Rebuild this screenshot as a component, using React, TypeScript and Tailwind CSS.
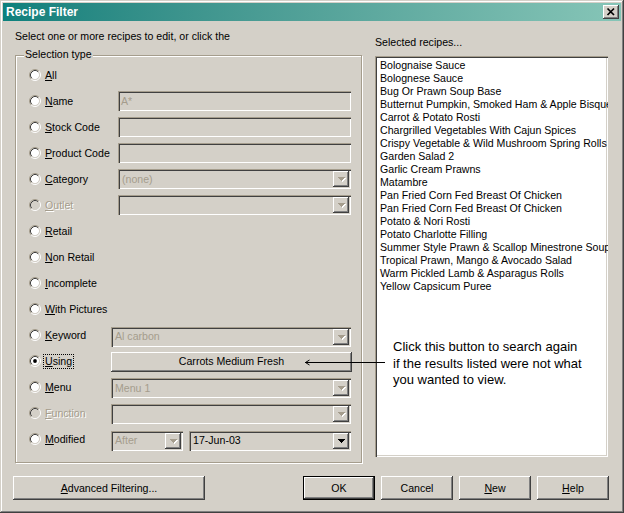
import React from "react";

const sunken =
  "shadow-[inset_1px_1px_0_#a59d8d,inset_2px_2px_0_#404040,inset_-1px_-1px_0_#ffffff,inset_-2px_-2px_0_#d4d0c8]";
const raised =
  "shadow-[inset_-1px_-1px_0_#404040,inset_1px_1px_0_#ffffff,inset_-2px_-2px_0_#808080,inset_2px_2px_0_#d4d0c8]";
const disText = "text-[#a59d8d]";
const disLabel = "text-[#a59d8d] [text-shadow:1px_1px_0_#ffffff]";

function Radio({ checked = false, disabled = false }: { checked?: boolean; disabled?: boolean }) {
  return (
    <svg width="12" height="12" viewBox="0 0 12 12" className="shrink-0">
      <circle cx="6" cy="6" r="4.2" fill={disabled ? "#d4d0c8" : "#ffffff"} />
      <path d="M2.11 9.89A5.5 5.5 0 0 1 9.89 2.11" stroke="#a59d8d" fill="none" />
      <path d="M9.89 2.11A5.5 5.5 0 0 1 2.11 9.89" stroke="#ffffff" fill="none" />
      <path d="M2.82 9.18A4.5 4.5 0 0 1 9.18 2.82" stroke="#404040" fill="none" />
      <path d="M9.18 2.82A4.5 4.5 0 0 1 2.82 9.18" stroke="#d4d0c8" fill="none" />
      {checked && <circle cx="6" cy="6" r="1.9" fill="#000000" />}
    </svg>
  );
}

function Arrow({ disabled = false }: { disabled?: boolean }) {
  const tri = (dx: number, dy: number, fill: string) => (
    <g fill={fill}>
      <rect x={0 + dx} y={0 + dy} width="7" height="1" />
      <rect x={1 + dx} y={1 + dy} width="5" height="1" />
      <rect x={2 + dx} y={2 + dy} width="3" height="1" />
      <rect x={3 + dx} y={3 + dy} width="1" height="1" />
    </g>
  );
  return (
    <svg width="8" height="5" viewBox="0 0 8 5" shapeRendering="crispEdges">
      {disabled ? (
        <>
          {tri(1, 1, "#ffffff")}
          {tri(0, 0, "#a59d8d")}
        </>
      ) : (
        tri(0, 0, "#000000")
      )}
    </svg>
  );
}

function DropBtn({ disabled = false }: { disabled?: boolean }) {
  return (
    <div className={`w-[16px] h-[16px] shrink-0 bg-[#d4d0c8] flex items-center justify-center pl-[1px] pt-[1px] ${raised}`}>
      <Arrow disabled={disabled} />
    </div>
  );
}

function Edit({ value = "", className = "" }: { value?: string; className?: string }) {
  return (
    <div className={`h-[20px] flex items-center pl-[3px] ${sunken} ${className}`}>
      <span className={`leading-[13px] ${disText}`}>{value}</span>
    </div>
  );
}

function Combo({
  value = "",
  disabled = true,
  className = "",
}: {
  value?: string;
  disabled?: boolean;
  className?: string;
}) {
  return (
    <div className={`h-[20px] flex items-center p-[2px] ${sunken} ${className}`}>
      <span className={`flex-1 pl-[2px] leading-[13px] whitespace-nowrap ${disabled ? disText : "text-black"}`}>
        {value}
      </span>
      <DropBtn disabled={disabled} />
    </div>
  );
}

function Label({ text, disabled = false, focus = false }: { text: string; disabled?: boolean; focus?: boolean }) {
  return (
    <span
      className={`leading-[13px] whitespace-nowrap ${disabled ? disLabel : "text-black"} ${
        focus ? "border border-dotted border-black px-[1px] -ml-[2px]" : ""
      }`}
    >
      <span className="underline">{text[0]}</span>
      {text.slice(1)}
    </span>
  );
}

function Row({
  label,
  labelW = 73,
  checked = false,
  disabled = false,
  focus = false,
  children,
}: {
  label: string;
  labelW?: number;
  checked?: boolean;
  disabled?: boolean;
  focus?: boolean;
  children?: React.ReactNode;
}) {
  return (
    <div className="flex items-center h-[26px] pl-[13px] pr-[10px]">
      <Radio checked={checked} disabled={disabled} />
      <div className={`ml-[4px] shrink-0 flex items-center ${labelW === 73 ? "w-[73px]" : "w-[66px]"}`}>
        <Label text={label} disabled={disabled} focus={focus} />
      </div>
      <div className="flex-1 flex items-center min-w-0">{children}</div>
    </div>
  );
}

function Button({
  children,
  className = "",
  isDefault = false,
}: {
  children: React.ReactNode;
  className?: string;
  isDefault?: boolean;
}) {
  if (isDefault) {
    return (
      <div className={`border border-black flex ${className}`}>
        <div className={`flex-1 flex items-center justify-center leading-[13px] ${raised}`}>{children}</div>
      </div>
    );
  }
  return <div className={`flex items-center justify-center leading-[13px] ${raised} ${className}`}>{children}</div>;
}

const recipes = [
  "Bolognaise Sauce",
  "Bolognese Sauce",
  "Bug Or Prawn Soup Base",
  "Butternut Pumpkin, Smoked Ham & Apple Bisque",
  "Carrot & Potato Rosti",
  "Chargrilled Vegetables With Cajun Spices",
  "Crispy Vegetable & Wild Mushroom Spring Rolls",
  "Garden Salad 2",
  "Garlic Cream Prawns",
  "Matambre",
  "Pan Fried Corn Fed Breast Of Chicken",
  "Pan Fried Corn Fed Breast Of Chicken",
  "Potato & Nori Rosti",
  "Potato Charlotte Filling",
  "Summer Style Prawn & Scallop Minestrone Soup",
  "Tropical Prawn, Mango & Avocado Salad",
  "Warm Pickled Lamb & Asparagus Rolls",
  "Yellow Capsicum Puree",
];

export default function App() {
  return (
    <div
      className="relative w-[624px] h-[513px] bg-[#d4d0c8] p-[3px] flex flex-col overflow-hidden select-none text-[10.6px] text-black font-['Liberation_Sans',Arial,sans-serif] shadow-[inset_-1px_-1px_0_#404040,inset_1px_1px_0_#d4d0c8,inset_-2px_-2px_0_#808080,inset_2px_2px_0_#ffffff]"
    >
      {/* Title bar */}
      <div className="h-[18px] shrink-0 flex items-center pl-[3px] pr-[2px] bg-gradient-to-r from-[#0b807c] to-[#86c5b7]">
        <span className="flex-1 text-white font-bold text-[12px] leading-[14px]">Recipe Filter</span>
        <div className={`w-[16px] h-[14px] bg-[#d4d0c8] flex items-center justify-center ${raised}`}>
          <svg width="16" height="14" viewBox="0 0 16 14">
            <path d="M4.5 3.5L11 10M11 3.5L4.5 10" stroke="#000" strokeWidth="1.7" />
          </svg>
        </div>
      </div>

      {/* Body */}
      <div className="flex flex-col flex-1">
        <div className="flex h-[442px]">
          {/* Left column */}
          <div className="ml-[12px] w-[347px] pt-[9px] flex flex-col">
            <div className="h-[13px] leading-[13px] whitespace-nowrap">
              Select one or more recipes to edit, or click the
            </div>
            <div className="mt-[12px] relative w-[347px] h-[408px] border border-[#a59d8d] shadow-[inset_1px_1px_0_#ffffff,1px_1px_0_#ffffff] pt-[6px]">
              <span className="absolute left-[8px] top-[-8px] px-[1px] bg-[#d4d0c8] leading-[13px]">Selection type</span>
              <Row label="All" />
              <Row label="Name">
                <Edit value="A*" className="w-full" />
              </Row>
              <Row label="Stock Code">
                <Edit className="w-full" />
              </Row>
              <Row label="Product Code">
                <Edit className="w-full" />
              </Row>
              <Row label="Category">
                <Combo value="(none)" className="w-full" />
              </Row>
              <Row label="Outlet" disabled>
                <Combo className="w-full" />
              </Row>
              <Row label="Retail" />
              <Row label="Non Retail" />
              <Row label="Incomplete" />
              <Row label="With Pictures" />
              <Row label="Keyword" labelW={66}>
                <Combo value="Al carbon" className="w-full mt-[3px]" />
              </Row>
              <Row label="Using" labelW={66} checked focus>
                <Button className="w-[241px] h-[20px] -mr-[1px] mt-[1px]">Carrots Medium Fresh</Button>
              </Row>
              <Row label="Menu" labelW={66}>
                <Combo value="Menu 1" className="w-full mt-[2px]" />
              </Row>
              <Row label="Function" labelW={66} disabled>
                <Combo className="w-full mt-[2px]" />
              </Row>
              <Row label="Modified" labelW={66}>
                <Combo value="After" className="w-[72px] shrink-0 mt-[3px]" />
                <Combo value="17-Jun-03" disabled={false} className="ml-[6px] flex-1 mt-[3px]" />
              </Row>
            </div>
          </div>

          {/* Right column */}
          <div className="ml-[13px] w-[233px] pt-[15px] flex flex-col">
            <div className="h-[13px] leading-[13px] whitespace-nowrap">Selected recipes...</div>
            <div className={`mt-[7px] h-[401px] bg-white p-[2px] overflow-hidden ${sunken}`}>
              <div className="pl-[3px] pt-[1px]">
                {recipes.map((r, i) => (
                  <div key={i} className="h-[13px] leading-[13px] whitespace-nowrap">
                    {r}
                  </div>
                ))}
              </div>
            </div>
          </div>
        </div>

        {/* Buttons */}
        <div className="mt-[13px] h-[24px] flex">
          <Button className="ml-[10px] w-[192px] h-[24px]">
            <span>
              <span className="underline">A</span>dvanced Filtering...
            </span>
          </Button>
          <div className="ml-auto mr-[12px] flex gap-[6px]">
            <Button isDefault className="w-[72px] h-[24px]">
              OK
            </Button>
            <Button className="w-[72px] h-[24px]">Cancel</Button>
            <Button className="w-[72px] h-[24px]">
              <span>
                <span className="underline">N</span>ew
              </span>
            </Button>
            <Button className="w-[72px] h-[24px]">
              <span>
                <span className="underline">H</span>elp
              </span>
            </Button>
          </div>
        </div>
      </div>

      {/* Callout annotation */}
      <svg className="absolute left-[300px] top-[355px]" width="90" height="14" viewBox="0 0 90 14">
        <path d="M5 7.5H85" stroke="#000" strokeWidth="1" />
        <path d="M9.5 5L5.5 7.5L9.5 10" stroke="#000" strokeWidth="1" fill="none" />
      </svg>
      <div className="absolute left-[393px] top-[339px] text-[13px] leading-[16.5px] text-black whitespace-nowrap">
        Click this button to search again
        <br />
        if the results listed were not what
        <br />
        you wanted to view.
      </div>
    </div>
  );
}
